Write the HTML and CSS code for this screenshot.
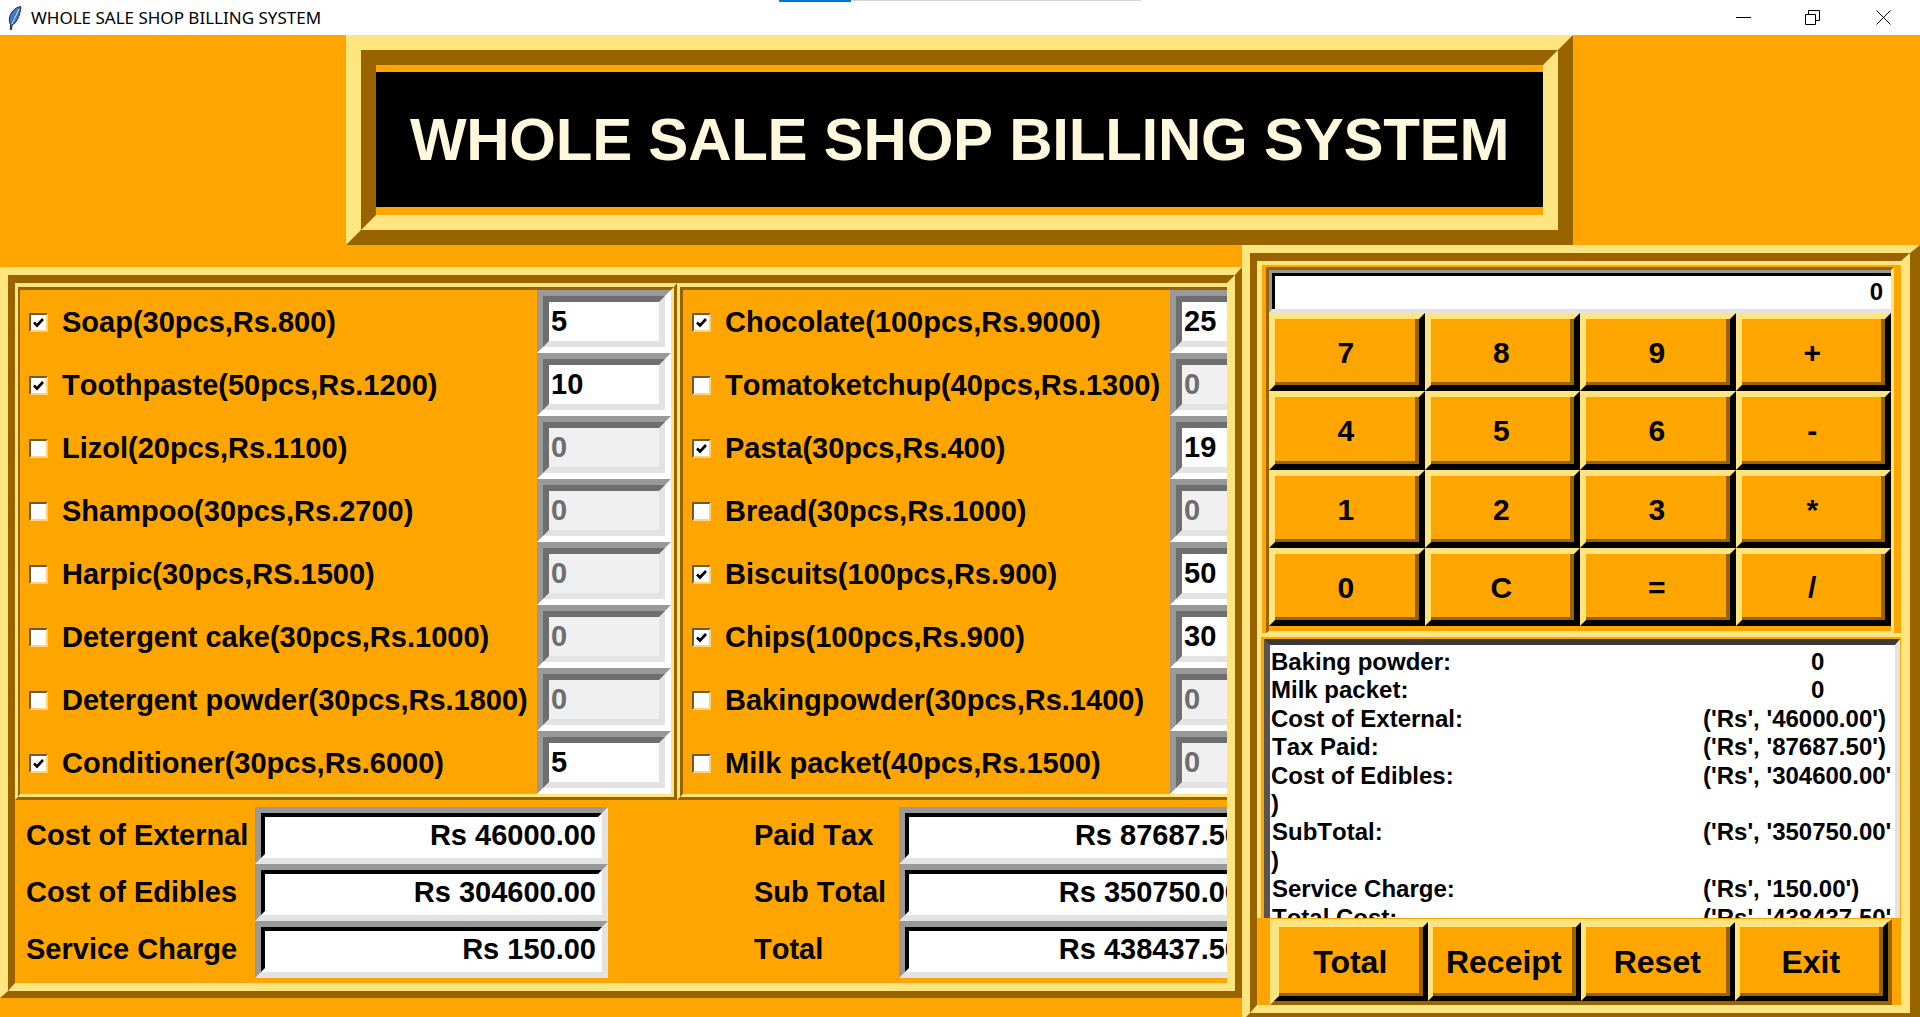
FILE: index.html
```html
<!DOCTYPE html>
<html lang="en">
<head>
<meta charset="utf-8">
<title>WHOLE SALE SHOP BILLING SYSTEM</title>
<link rel="stylesheet" href="styles.css">
</head>
<body>
<div class="titlebar">
  <svg class="feather" width="14" height="24" viewBox="0 0 14 24"><path d="M12.5 .5C7 1.5 2.6 6 1.5 12c-.4 2.500-.1 5 1 6.500L2.300 23.500l1.200.2.600-4.700C8 17.500 11.800 11 12.900 .9z" fill="#3f78c4" stroke="#1d2a44" stroke-width="1"/><path d="M11 3 4 18" stroke="#c9dcf5" stroke-width="1" fill="none"/></svg>
  <span class="titlebar-text">WHOLE SALE SHOP BILLING SYSTEM</span>
  <div class="controls">
    <svg class="ctl" width="15" height="15" viewBox="0 0 15 15"><path d="M0 7.500H15" stroke="#000" fill="none"/></svg>
    <svg class="ctl" width="15" height="15" viewBox="0 0 15 15"><path d="M.5 4.500h10v10H.500zM3.500 4.500V.5h11v10h-4" stroke="#000" fill="none"/></svg>
    <svg class="ctl" width="15" height="15" viewBox="0 0 15 15"><path d="M.5.5 14.500 14.500M14.500.5.5 14.500" stroke="#000" fill="none"/></svg>
  </div>
  <div class="tabline"><span class="tabline-blue"></span><span class="tabline-grey"></span></div>
</div>
<div class="main">
  <header class="banner">
    <div class="banner-inner"><h1 class="banner-title">WHOLE SALE SHOP BILLING SYSTEM</h1></div>
  </header>

  <section class="left-panel">
    <div class="left-inner">
      <div class="item-frames">
        <div class="frame frame-a"><div class="frame-in">
          <div class="row"><span class="check on"><svg width="11" height="11" viewBox="0 0 11 11"><path d="M1 5.500 4 8.500 10 2" fill="none" stroke="#000" stroke-width="2.600"/></svg></span><span class="label">Soap(30pcs,Rs.800)</span><span class="entry"><span class="entry-in">5</span></span></div>
          <div class="row"><span class="check on"><svg width="11" height="11" viewBox="0 0 11 11"><path d="M1 5.500 4 8.500 10 2" fill="none" stroke="#000" stroke-width="2.600"/></svg></span><span class="label">Toothpaste(50pcs,Rs.1200)</span><span class="entry"><span class="entry-in">10</span></span></div>
          <div class="row"><span class="check"></span><span class="label">Lizol(20pcs,Rs.1100)</span><span class="entry"><span class="entry-in off">0</span></span></div>
          <div class="row"><span class="check"></span><span class="label">Shampoo(30pcs,Rs.2700)</span><span class="entry"><span class="entry-in off">0</span></span></div>
          <div class="row"><span class="check"></span><span class="label">Harpic(30pcs,RS.1500)</span><span class="entry"><span class="entry-in off">0</span></span></div>
          <div class="row"><span class="check"></span><span class="label">Detergent cake(30pcs,Rs.1000)</span><span class="entry"><span class="entry-in off">0</span></span></div>
          <div class="row"><span class="check"></span><span class="label">Detergent powder(30pcs,Rs.1800)</span><span class="entry"><span class="entry-in off">0</span></span></div>
          <div class="row"><span class="check on"><svg width="11" height="11" viewBox="0 0 11 11"><path d="M1 5.500 4 8.500 10 2" fill="none" stroke="#000" stroke-width="2.600"/></svg></span><span class="label">Conditioner(30pcs,Rs.6000)</span><span class="entry"><span class="entry-in">5</span></span></div>
        </div></div>
        <div class="frame frame-b"><div class="frame-in">
          <div class="row"><span class="check on"><svg width="11" height="11" viewBox="0 0 11 11"><path d="M1 5.500 4 8.500 10 2" fill="none" stroke="#000" stroke-width="2.600"/></svg></span><span class="label">Chocolate(100pcs,Rs.9000)</span><span class="entry"><span class="entry-in">25</span></span></div>
          <div class="row"><span class="check"></span><span class="label">Tomatoketchup(40pcs,Rs.1300)</span><span class="entry"><span class="entry-in off">0</span></span></div>
          <div class="row"><span class="check on"><svg width="11" height="11" viewBox="0 0 11 11"><path d="M1 5.500 4 8.500 10 2" fill="none" stroke="#000" stroke-width="2.600"/></svg></span><span class="label">Pasta(30pcs,Rs.400)</span><span class="entry"><span class="entry-in">19</span></span></div>
          <div class="row"><span class="check"></span><span class="label">Bread(30pcs,Rs.1000)</span><span class="entry"><span class="entry-in off">0</span></span></div>
          <div class="row"><span class="check on"><svg width="11" height="11" viewBox="0 0 11 11"><path d="M1 5.500 4 8.500 10 2" fill="none" stroke="#000" stroke-width="2.600"/></svg></span><span class="label">Biscuits(100pcs,Rs.900)</span><span class="entry"><span class="entry-in">50</span></span></div>
          <div class="row"><span class="check on"><svg width="11" height="11" viewBox="0 0 11 11"><path d="M1 5.500 4 8.500 10 2" fill="none" stroke="#000" stroke-width="2.600"/></svg></span><span class="label">Chips(100pcs,Rs.900)</span><span class="entry"><span class="entry-in">30</span></span></div>
          <div class="row"><span class="check"></span><span class="label">Bakingpowder(30pcs,Rs.1400)</span><span class="entry"><span class="entry-in off">0</span></span></div>
          <div class="row"><span class="check"></span><span class="label">Milk packet(40pcs,Rs.1500)</span><span class="entry"><span class="entry-in off">0</span></span></div>
        </div></div>
      </div>
      <div class="summary">
        <span class="sum-label first">Cost of External</span><span class="sum-box"><span class="sum-in">Rs 46000.00</span></span>
        <span class="sum-label second">Paid Tax</span><span class="sum-box"><span class="sum-in">Rs 87687.50</span></span>
        <span class="sum-label first">Cost of Edibles</span><span class="sum-box"><span class="sum-in">Rs 304600.00</span></span>
        <span class="sum-label second">Sub Total</span><span class="sum-box"><span class="sum-in">Rs 350750.00</span></span>
        <span class="sum-label first">Service Charge</span><span class="sum-box"><span class="sum-in">Rs 150.00</span></span>
        <span class="sum-label second">Total</span><span class="sum-box"><span class="sum-in">Rs 438437.50</span></span>
      </div>
    </div>
  </section>

  <section class="right-panel">
    <div class="right-inner">
      <div class="calc-frame"><div class="calc-in">
        <div class="display"><span class="display-in">0</span></div>
        <div class="keys">
          <button class="key"><span class="key-face">7</span></button>
          <button class="key"><span class="key-face">8</span></button>
          <button class="key"><span class="key-face">9</span></button>
          <button class="key"><span class="key-face">+</span></button>
          <button class="key"><span class="key-face">4</span></button>
          <button class="key"><span class="key-face">5</span></button>
          <button class="key"><span class="key-face">6</span></button>
          <button class="key"><span class="key-face">-</span></button>
          <button class="key"><span class="key-face">1</span></button>
          <button class="key"><span class="key-face">2</span></button>
          <button class="key"><span class="key-face">3</span></button>
          <button class="key"><span class="key-face">*</span></button>
          <button class="key"><span class="key-face">0</span></button>
          <button class="key"><span class="key-face">C</span></button>
          <button class="key"><span class="key-face">=</span></button>
          <button class="key"><span class="key-face">/</span></button>
        </div>
      </div></div>
      <div class="receipt-frame">
        <div class="receipt">
          <div class="line"><span class="line-k">Baking powder:</span><span class="line-v zero">0</span></div>
          <div class="line"><span class="line-k">Milk packet:</span><span class="line-v zero">0</span></div>
          <div class="line"><span class="line-k">Cost of External:</span><span class="line-v">('Rs', '46000.00')</span></div>
          <div class="line"><span class="line-k shift">Tax Paid:</span><span class="line-v">('Rs', '87687.50')</span></div>
          <div class="line"><span class="line-k">Cost of Edibles:</span><span class="line-v">('Rs', '304600.00'</span></div>
          <div class="line"><span class="line-k">)</span></div>
          <div class="line"><span class="line-k shift">SubTotal:</span><span class="line-v">('Rs', '350750.00'</span></div>
          <div class="line"><span class="line-k">)</span></div>
          <div class="line"><span class="line-k shift">Service Charge:</span><span class="line-v">('Rs', '150.00')</span></div>
          <div class="line"><span class="line-k shift">Total Cost:</span><span class="line-v">('Rs', '438437.50'</span></div>
        </div>
      </div>
      <div class="action-frame"><div class="actions">
        <button class="act"><span class="act-face">Total</span></button>
        <button class="act"><span class="act-face">Receipt</span></button>
        <button class="act"><span class="act-face">Reset</span></button>
        <button class="act"><span class="act-face">Exit</span></button>
      </div></div>
    </div>
  </section>
</div>
</body>
</html>
```
FILE: styles.css
```css
* { box-sizing: border-box; }
html, body { margin: 0; padding: 0; }
body {
  width: 1920px;
  height: 1017px;
  overflow: hidden;
  background: #ffa500;
  font-family: "Liberation Sans", Arial, sans-serif;
  font-kerning: none;
  color: #000;
}
.titlebar {
  position: relative;
  height: 35px;
  background: #fff;
  display: flex;
  align-items: center;
  padding-left: 8px;
}
.feather { flex: none; margin-right: 9px; }
.titlebar-text {
  font-family: "Noto Sans", sans-serif;
  font-size: 17px;
  color: #000;
  white-space: nowrap;
}
.controls {
  margin-left: auto;
  display: flex;
  gap: 54px;
  padding-right: 29px;
}
.ctl { display: block; }
.ctl:last-child { margin-left: 2px; }
.tabline {
  position: absolute;
  left: 779px;
  top: 0;
  display: flex;
}
.tabline-blue { width: 72px; height: 2px; background: #0078d7; }
.tabline-grey { width: 290px; height: 1px; background: #d6d6d6; }

.main {
  display: grid;
  grid-template-columns: 1242px 678px;
  grid-template-rows: 210px 772px;
  height: 982px;
}
.banner {
  grid-column: 1 / -1;
  margin-left: 346px;
  width: 1227px;
  border-style: solid;
  border-width: 15px;
  border-color: #ffe57f #996300 #996300 #ffe57f;
}
.banner-inner {
  height: 180px;
  border-style: solid;
  border-width: 15px;
  border-color: #996300 #ffe57f #ffe57f #996300;
  padding: 7px 0 8px;
}
.banner-title {
  margin: 0;
  height: 135px;
  background: #000;
  color: #fff8dc;
  font-size: 60px;
  font-weight: 700;
  letter-spacing: -0.25px;
  line-height: 135px;
  text-align: center;
  white-space: nowrap;
}

.left-panel {
  margin-top: 22px;
  height: 731px;
  border-style: solid;
  border-width: 8px 7px 7px 8px;
  border-color: #ffe57f #996300 #996300 #ffe57f;
}
.left-inner {
  height: 716px;
  border-style: solid;
  border-width: 8px 8px 8px 7px;
  border-color: #996300 #ffe57f #ffe57f #996300;
  overflow: hidden;
}
.item-frames { display: flex; height: 517px; }
.frame {
  flex: none;
  height: 517px;
  border-style: solid;
  border-width: 4px 3px 3px 3px;
  border-color: #ffe57f #996300 #996300 #ffe57f;
}
.frame-in {
  height: 510px;
  border-style: solid;
  border-width: 3px 3px 3px 2px;
  border-color: #996300 #ffe57f #ffe57f #996300;
}
.frame-a { width: 662px; }
.frame-b { width: 633px; }
.frame-b .frame-in { border-left-width: 3px; }
.row {
  display: flex;
  align-items: center;
  height: 63px;
  padding-left: 9px;
}
.check {
  flex: none;
  width: 19px;
  height: 19px;
  margin-top: 2px;
  margin-right: 14px;
  background: #fff;
  border-style: solid;
  border-width: 2px;
  border-color: #6b5a3a #ffd27a #ffd27a #6b5a3a;
  display: flex;
  align-items: center;
  justify-content: center;
}
.check svg { display: block; }
.label {
  margin-top: 2px;
  font-size: 29px;
  font-weight: 700;
  white-space: nowrap;
}
.entry {
  display: block;
  flex: none;
  margin-left: auto;
  width: 134px;
  height: 63px;
  border-style: solid;
  border-width: 6px;
  border-color: #999 #fff #fff #999;
}
.entry-in {
  display: block;
  height: 51px;
  border-style: solid;
  border-width: 6px;
  border-color: #6e6e6e #e3e3e3 #e3e3e3 #6e6e6e;
  background: #fff;
  padding-left: 2px;
  font-size: 29px;
  font-weight: 700;
  line-height: 39px;
}
.entry-in.off { background: #f0f0f0; color: #6d6d6d; }

.summary {
  display: grid;
  grid-template-columns: 240px 353px 146px 145px 354px;
  grid-auto-rows: 57px;
  width: 1238px;
  padding-top: 7px;
}
.sum-label {
  font-size: 29px;
  font-weight: 700;
  line-height: 57px;
  white-space: nowrap;
}
.sum-label.first { grid-column: 1; padding-left: 11px; }
.sum-label.second { grid-column: 4; }
.sum-box {
  display: block;
  border-style: solid;
  border-width: 6px;
  border-color: #999 #e3e3e3 #e3e3e3 #999;
}
.sum-in {
  display: block;
  height: 45px;
  border-style: solid;
  border-width: 4px;
  border-color: #000 #fff #fff #000;
  background: #fff;
  padding-right: 2px;
  text-align: right;
  font-size: 29px;
  font-weight: 700;
  line-height: 37px;
  white-space: nowrap;
}

.right-panel {
  height: 776px;
  border-style: solid;
  border-width: 8px 10px 8px 8px;
  border-color: #ffe57f #996300 #996300 #ffe57f;
}
.right-inner {
  height: 760px;
  border-style: solid;
  border-width: 8px 9px 8px 7px;
  border-color: #996300 #ffe57f #ffe57f #996300;
}
.calc-frame {
  height: 372px;
  border-style: solid;
  border-width: 4px 0 0 5px;
  border-color: #ffe57f;
  padding: 2px 7px 0 4px;
}
.calc-in {
  height: 366px;
  border-style: solid;
  border-width: 3px 3px 2px 3px;
  border-color: #996300 #ffe57f #ffe57f #996300;
}
.display {
  height: 43px;
  border-style: solid;
  border-width: 3px 0 4px 3px;
  border-color: #999 #e3e3e3 #e3e3e3 #999;
}
.display-in {
  display: block;
  height: 36px;
  border-style: solid;
  border-width: 3px 0 0 3px;
  border-color: #000;
  background: #fff;
  padding-right: 8px;
  text-align: right;
  font-size: 24px;
  font-weight: 700;
  line-height: 32px;
}
.keys {
  display: grid;
  grid-template-columns: repeat(4, 1fr);
  grid-template-rows: repeat(4, 78.25px);
}
.key, .act {
  display: block;
  margin: 0;
  padding: 0;
  background: #ffa500;
  font-family: inherit;
  color: #000;
  border-style: solid;
  border-color: #ffe57f #000 #000 #ffe57f;
}
.key { border-width: 6px; }
.key-face, .act-face {
  display: flex;
  align-items: center;
  justify-content: center;
  height: 100%;
  font-weight: 700;
  border-style: solid;
  border-color: #996300;
  border-width: 0 4px 3px 0;
}
.key-face { font-size: 30px; padding: 5px 0 0 2px; }

.receipt-frame {
  height: 285px;
  overflow: hidden;
  border-style: solid;
  border-width: 4px 0 0 4px;
  border-color: #ffe57f;
  padding: 2px 1px 0 3px;
}
.receipt {
  height: 290px;
  border-style: solid;
  border-width: 6px 5px 0 6px;
  border-color: #3a3a3a #e3e3e3 #000 #555;
  background: #fff;
  padding: 3px 0 0 1px;
  overflow: hidden;
  font-size: 24px;
  font-weight: 700;
  line-height: 28.4px;
}
.line { display: flex; height: 28.4px; white-space: nowrap; }
.line-k { flex: none; width: 432px; }
.line-k.shift { padding-left: 1px; }
.line-v.zero { padding-left: 108px; }

.action-frame {
  height: 87px;
  padding: 1px 9px 0 13px;
  background: #ffa500;
}
.actions {
  display: grid;
  grid-template-columns: repeat(4, 1fr);
  height: 86px;
  border-style: solid;
  border-width: 3px 4px 4px 4px;
  border-color: #ffe57f #996300 #996300 #ffe57f;
}
.act { border-width: 5px; }
.act-face { font-size: 32px; padding: 5px 0 0 3px; }
```
